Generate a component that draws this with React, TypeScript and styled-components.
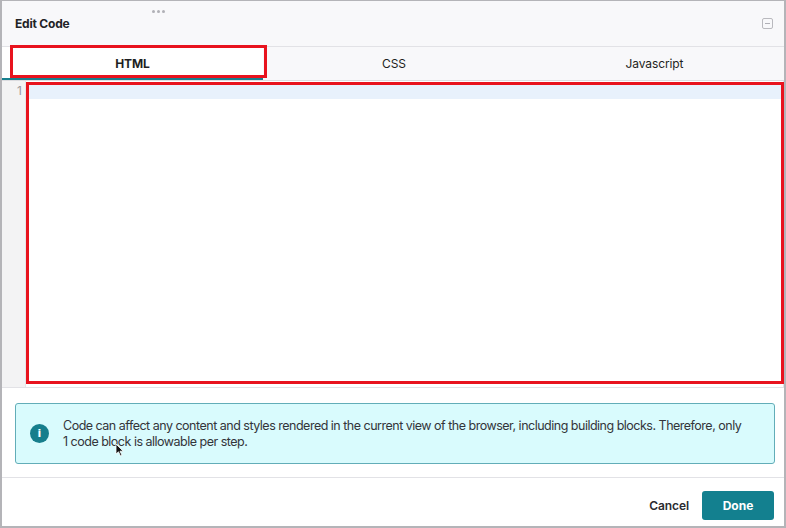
import styled, { createGlobalStyle } from "styled-components";

const GlobalStyle = createGlobalStyle`
  html, body {
    margin: 0;
    padding: 0;
    background: #ffffff;
  }
  body {
    font-family: Inter, "Noto Sans", "Liberation Sans", sans-serif;
  }
`;

const Dialog = styled.div`
  position: relative;
  width: 786px;
  height: 528px;
  box-sizing: border-box;
  border: 1px solid #b4b4b8;
  border-left-width: 2px;
  border-right-width: 2px;
  border-bottom-width: 2px;
  display: flex;
  flex-direction: column;
  background: #ffffff;
  overflow: hidden;
`;

const Header = styled.div`
  position: relative;
  height: 45px;
  flex-shrink: 0;
  display: flex;
  align-items: center;
  justify-content: space-between;
  padding: 0 11px 0 13px;
  background: #f8f8fa;
  border-bottom: 1px solid #e2e2e6;
`;

const Title = styled.h2`
  margin: 0;
  padding-bottom: 1px;
  font-size: 12px;
  font-weight: 700;
  letter-spacing: -0.2px;
  color: #222326;
`;

const DragHandle = styled.div`
  position: absolute;
  top: 9px;
  left: 150px;
  display: flex;
  gap: 2px;
`;

const Dot = styled.span`
  width: 3px;
  height: 3px;
  border-radius: 50%;
  background: #b0b0b6;
`;

const MinimizeBtn = styled.button`
  width: 11px;
  height: 11px;
  padding: 0;
  border: 1px solid #b9b9be;
  border-radius: 2px;
  background: transparent;
  display: flex;
  align-items: center;
  justify-content: center;
  cursor: pointer;
  &::after {
    content: "";
    width: 5px;
    height: 1px;
    background: #b0b0b6;
  }
`;

const TabBar = styled.div`
  display: grid;
  grid-template-columns: 261px 262px 1fr;
  height: 33px;
  flex-shrink: 0;
  background: #f8f8fa;
  border-bottom: 1px solid #dcdce0;
`;

const Tab = styled.button<{ $active?: boolean }>`
  border: none;
  margin: 0;
  padding: 2px 0 0;
  font-family: inherit;
  font-size: 12px;
  font-weight: ${(p) => (p.$active ? 700 : 400)};
  letter-spacing: -0.1px;
  color: #1e1f22;
  background: ${(p) => (p.$active ? "#ffffff" : "transparent")};
  border-bottom: 2px solid ${(p) => (p.$active ? "#17808e" : "transparent")};
  cursor: pointer;
`;

const Editor = styled.div`
  height: 306px;
  flex-shrink: 0;
  display: flex;
  border-bottom: 1px solid #e2e2e6;
  border-right: 1px solid #e2e2e6;
`;

const Gutter = styled.div`
  width: 24px;
  flex-shrink: 0;
  background: #f3f3f4;
  border-right: 1px solid #e6e6e8;
  box-sizing: border-box;
  padding: 3px 3px 0 0;
  text-align: right;
  font-size: 12px;
  line-height: 14px;
  color: #9a9aa0;
`;

const Code = styled.div`
  flex: 1;
  padding-top: 4px;
`;

const ActiveLine = styled.div`
  height: 14px;
  background: #e8f1fc;
`;

const Body = styled.div`
  flex: 1;
  display: flex;
  flex-direction: column;
`;

const Notice = styled.div`
  margin: 15px 9px 0 13px;
  height: 61px;
  box-sizing: border-box;
  display: flex;
  align-items: center;
  gap: 14px;
  padding: 0 30px 0 14px;
  background: #d9fbfd;
  border: 1px solid #62adb8;
  border-radius: 3px;
`;

const InfoIcon = styled.span`
  width: 19px;
  height: 19px;
  flex-shrink: 0;
  border-radius: 50%;
  background: #167e8c;
  color: #ffffff;
  display: flex;
  align-items: center;
  justify-content: center;
  font-size: 11px;
  font-weight: 700;
  font-family: "DejaVu Sans", sans-serif;
`;

const NoticeText = styled.p`
  margin: 0;
  font-size: 12.5px;
  line-height: 16px;
  letter-spacing: -0.5px;
  color: #33353a;
`;

const Footer = styled.div`
  margin-top: 13px;
  flex: 1;
  display: flex;
  align-items: center;
  justify-content: flex-end;
  gap: 13px;
  padding: 6px 10px 0 0;
  border-top: 1px solid #e2e2e6;
`;

const TextButton = styled.button`
  border: none;
  background: transparent;
  padding: 0;
  font-family: inherit;
  font-size: 12px;
  font-weight: 600;
  letter-spacing: -0.1px;
  color: #2b2c30;
  cursor: pointer;
`;

const PrimaryButton = styled.button`
  width: 72px;
  height: 29px;
  border: none;
  border-radius: 3px;
  background: #13808f;
  color: #ffffff;
  font-family: inherit;
  font-size: 12px;
  font-weight: 700;
  cursor: pointer;
`;

const Highlight = styled.div<{ $x: number; $y: number; $w: number; $h: number }>`
  position: absolute;
  left: ${(p) => p.$x}px;
  top: ${(p) => p.$y}px;
  width: ${(p) => p.$w}px;
  height: ${(p) => p.$h}px;
  box-sizing: border-box;
  border: 3px solid #e8131e;
  pointer-events: none;
`;

const Cursor = styled.svg`
  position: absolute;
  left: 113px;
  top: 442px;
  pointer-events: none;
`;

export default function App() {
  return (
    <>
      <GlobalStyle />
      <Dialog>
        <Header>
          <DragHandle>
            <Dot />
            <Dot />
            <Dot />
          </DragHandle>
          <Title>Edit Code</Title>
          <MinimizeBtn aria-label="Minimize" />
        </Header>
        <TabBar>
          <Tab $active>HTML</Tab>
          <Tab>CSS</Tab>
          <Tab>Javascript</Tab>
        </TabBar>
        <Editor>
          <Gutter>1</Gutter>
          <Code>
            <ActiveLine />
          </Code>
        </Editor>
        <Body>
          <Notice>
            <InfoIcon>i</InfoIcon>
            <NoticeText>
              Code can affect any content and styles rendered in the current view of the
              browser, including building blocks. Therefore, only 1 code block is allowable
              per step.
            </NoticeText>
          </Notice>
          <Footer>
            <TextButton>Cancel</TextButton>
            <PrimaryButton>Done</PrimaryButton>
          </Footer>
        </Body>
        <Highlight $x={8} $y={44} $w={257} $h={33} />
        <Highlight $x={24} $y={81} $w={758} $h={302} />
        <Cursor width="9" height="14" viewBox="0 0 9 14">
          <path d="M1 1 L1 11 L3.5 8.8 L5.5 13 L7 12.3 L5 8.2 L8.2 8.2 Z" fill="#111" stroke="#fff" strokeWidth="0.8" />
        </Cursor>
      </Dialog>
    </>
  );
}
